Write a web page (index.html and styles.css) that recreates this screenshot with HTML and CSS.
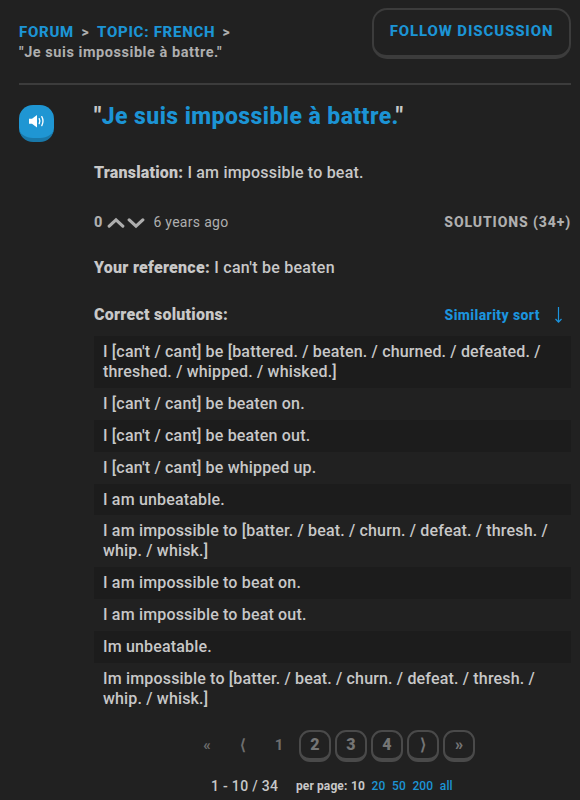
FILE: index.html
```html
<!DOCTYPE html>
<html lang="en">
<head>
<meta charset="utf-8">
<title>Je suis impossible à battre.</title>
<link rel="stylesheet" href="styles.css">
</head>
<body>
<header class="top">
  <nav class="crumbs">
    <div class="trail"><a class="t-forum">FORUM</a><span class="sep">&gt;</span><a class="t-topic">TOPIC: FRENCH</a><span class="sep">&gt;</span></div>
    <div><span class="current">"Je suis impossible à battre."</span></div>
  </nav>
  <a class="follow"><span>FOLLOW DISCUSSION</span></a>
</header>
<main class="post">
  <a class="speaker" aria-label="Listen">
    <svg width="17" height="14" viewBox="0 0 17 14"><path d="M1 4.7h3L9 1v12.5L4 9.7H1z" fill="#fff"/><path d="M11.2 4.6q1.4 2.5 0 5M13.8 2.6q2.4 4.5 0 9" fill="none" stroke="#fff" stroke-width="1.3" stroke-linecap="round"/></svg>
  </a>
  <section class="body">
    <h1><span>"<a>Je suis impossible à battre.</a>"</span></h1>
    <p class="translation"><b>Translation:</b> <span>I am impossible to beat.</span></p>
    <div class="meta">
      <b>0</b>
      <svg class="votes" width="38" height="12" viewBox="0 0 38 12"><path d="M2.2 9.1 9 2.9l6.8 6.2M22.2 2.9 29 9.1l6.8-6.2" fill="none" stroke="#adadad" stroke-width="3.2" stroke-linecap="round" stroke-linejoin="miter"/></svg>
      <span class="age">6 years ago</span>
      <span class="count">SOLUTIONS (34+)</span>
    </div>
    <p class="reference"><b>Your reference:</b> <span>I can't be beaten</span></p>
    <div class="listhead"><b>Correct solutions:</b><a class="sort">Similarity sort</a><svg width="11" height="18" viewBox="0 0 11 18"><path d="M5.5 1v15M2.5 13l3 3.2 3-3.2" fill="none" stroke="#1c94dd" stroke-width="1.2"/></svg></div>
    <ul class="solutions">
      <li><span>I [can't / cant] be [battered. / beaten. / churned. / defeated. /</span><br><span>threshed. / whipped. / whisked.]</span></li>
      <li><span>I [can't / cant] be beaten on.</span></li>
      <li><span>I [can't / cant] be beaten out.</span></li>
      <li><span>I [can't / cant] be whipped up.</span></li>
      <li><span>I am unbeatable.</span></li>
      <li><span>I am impossible to [batter. / beat. / churn. / defeat. / thresh. /</span><br><span>whip. / whisk.]</span></li>
      <li><span>I am impossible to beat on.</span></li>
      <li><span>I am impossible to beat out.</span></li>
      <li><span>Im unbeatable.</span></li>
      <li><span>Im impossible to [batter. / beat. / churn. / defeat. / thresh. /</span><br><span>whip. / whisk.]</span></li>
    </ul>
    <nav class="pages">
      <span class="pg off">«</span><span class="pg off">⟨</span><span class="pg off">1</span>
      <a class="pg">2</a><a class="pg">3</a><a class="pg">4</a><a class="pg">⟩</a><a class="pg">»</a>
    </nav>
    <footer class="range"><span class="total">1 - 10 / 34</span><span class="per"><b>per page:</b><b class="ten">10</b><a>20</a><a>50</a><a>200</a><a>all</a></span></footer>
  </section>
</main>
</body>
</html>
```
FILE: styles.css
```css
* { box-sizing: border-box; }
body {
  margin: 0;
  height: 800px;
  overflow: hidden;
  padding: 8px 9px 0 19px;
  background: #212121;
  color: #c8c8c8;
  font: 500 16px/20px Roboto, "Liberation Sans", sans-serif;
}
a { color: #1c94d5; }
h1, p, ul { margin: 0; padding: 0; }
b { font-weight: 900; }
.top {
  display: flex;
  justify-content: space-between;
  height: 77px;
  border-bottom: 2px solid #3c3c3c;
}
.crumbs { padding-top: 14px; font-size: 15px; font-weight: 800; color: #afafaf; white-space: nowrap; }
.trail { display: flex; height: 20px; }
.trail a { letter-spacing: .72px; }
.t-forum { width: 55px; }
.t-topic { width: 118px; }
.sep { width: 23px; padding-left: 7.5px; font-size: 14px; }
.current { font-size: 14.5px; font-weight: 700; letter-spacing: .55px; }
.follow {
  width: 199px;
  height: 51px;
  border: 2px solid #3c3c3c;
  border-bottom-width: 4px;
  border-radius: 15px;
  padding-top: 11px;
  text-align: center;
  font-size: 15px;
  font-weight: 800;
  letter-spacing: .88px;
}
.post { display: flex; }
.speaker {
  display: flex;
  align-items: center;
  justify-content: center;
  width: 35px;
  height: 37px;
  margin: 20px 40px 0 0;
  padding-bottom: 2px;
  border-radius: 14px;
  border-bottom: 4px solid #1978a9;
  background: #1f96d3;
}
.body { width: 477px; }
h1 { padding-top: 16px; font-size: 23px; line-height: 32px; font-weight: 800; letter-spacing: .42px; }
.translation { margin-top: 30px; letter-spacing: .2px; }
.meta { display: flex; align-items: center; height: 20px; margin-top: 29px; font-size: 15px; color: #afafaf; }
.meta b { padding-top: 1px; font-size: 14.5px; font-weight: 800; }
.votes { margin: 2px 8px 0 5px; }
.age { font-weight: 400; font-size: 14px; letter-spacing: .3px; }
.count { margin-left: auto; font-weight: 800; font-size: 14px; letter-spacing: .9px; }
.reference { margin-top: 26px; letter-spacing: .26px; }
.listhead { display: flex; align-items: center; height: 20px; margin-top: 27px; letter-spacing: .25px; }
.sort { margin-left: auto; font-size: 14px; font-weight: 800; letter-spacing: .4px; color: #1c94dd; }
.listhead svg { margin: 0 7px 0 13px; }
.solutions { margin-top: 11.2px; list-style: none; line-height: 19.87px; letter-spacing: .17px; }
.solutions li { padding: 6px 9px; white-space: nowrap; }
.solutions li:nth-child(odd) { background: #1c1c1c; }
.pages { display: flex; gap: 4px; margin: 15.6px 0 0 97px; }
.pg {
  display: flex;
  justify-content: center;
  width: 32px;
  height: 32px;
  padding-top: 3px;
  border: 2px solid #4a4a4a;
  border-bottom-width: 4px;
  border-radius: 11px;
  font-size: 16px;
  font-weight: 900;
  color: #757575;
}
.pg.off { border-color: transparent; font-size: 15px; font-weight: 700; color: #6e6e6e; }
.range { display: flex; margin: 14px 0 0 117px; }
.total { width: 85px; font-size: 14px; letter-spacing: .3px; }
.per { display: flex; gap: 6.6px; font-size: 12px; letter-spacing: .1px; }
.per b { font-weight: 700; }
.ten { margin-left: -3px; }
```
